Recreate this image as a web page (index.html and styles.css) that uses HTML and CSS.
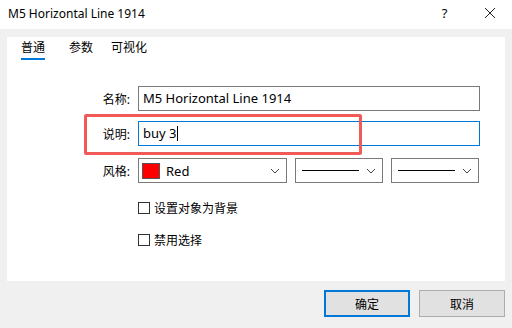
FILE: index.html
```html
<!DOCTYPE html>
<html lang="zh-CN">
<head>
    <meta charset="UTF-8">
    <title>M5 Horizontal Line 1914</title>
    <link rel="stylesheet" href="styles.css">
</head>
<body>
    <div class="dialog">
        <div class="title-bar">
            <span class="title">M5 Horizontal Line 1914</span>
            <span class="title-btn help">?</span>
            <span class="title-btn close">
                <svg width="12" height="12" viewBox="0 0 12 12"><path d="M1 1L11 11M11 1L1 11" stroke="#222" stroke-width="1"/></svg>
            </span>
        </div>

        <div class="body">
            <div class="panel">
                <div class="tabs">
                    <span class="tab active">普通</span>
                    <span class="tab">参数</span>
                    <span class="tab">可视化</span>
                </div>

                <div class="form">
                    <div class="row">
                        <label class="label">名称:</label>
                        <div class="input">M5 Horizontal Line 1914</div>
                    </div>
                    <div class="row highlighted">
                        <label class="label">说明:</label>
                        <div class="input focused">buy 3<span class="caret"></span></div>
                        <div class="mark"></div>
                    </div>
                    <div class="row">
                        <label class="label">风格:</label>
                        <div class="select color-select">
                            <span class="swatch"></span>
                            <span class="select-text">Red</span>
                            <svg class="chevron" width="10" height="6" viewBox="0 0 10 6"><path d="M1 1L5 5L9 1" fill="none" stroke="#444" stroke-width="1"/></svg>
                        </div>
                        <div class="select line-select">
                            <span class="line"></span>
                            <svg class="chevron" width="10" height="6" viewBox="0 0 10 6"><path d="M1 1L5 5L9 1" fill="none" stroke="#444" stroke-width="1"/></svg>
                        </div>
                        <div class="select line-select">
                            <span class="line"></span>
                            <svg class="chevron" width="10" height="6" viewBox="0 0 10 6"><path d="M1 1L5 5L9 1" fill="none" stroke="#444" stroke-width="1"/></svg>
                        </div>
                    </div>

                    <div class="checks">
                        <div class="check"><span class="box"></span>设置对象为背景</div>
                        <div class="check"><span class="box"></span>禁用选择</div>
                    </div>
                </div>
            </div>

            <div class="buttons">
                <button class="btn default">确定</button>
                <button class="btn">取消</button>
            </div>
        </div>
    </div>
</body>
</html>
```

FILE: styles.css
```css
body {
    margin: 0;
    font-family: "Noto Sans", "Noto Sans CJK SC", sans-serif;
    font-size: 12px;
    color: #000;
    background-color: #f0f0f0;
}

.dialog {
    width: 512px;
    height: 328px;
    display: flex;
    flex-direction: column;
    background-color: #f0f0f0;
}

.title-bar {
    height: 29px;
    background-color: #fff;
    display: flex;
    align-items: center;
    padding-left: 8px;
}

.title {
    flex: 1;
    font-size: 12px;
    margin-top: -3px;
}

.title-btn {
    width: 45px;
    text-align: center;
    font-size: 13px;
    margin-top: -3px;
}

.close svg {
    display: block;
    margin: 0 auto;
}

.body {
    flex: 1;
    padding: 8px 7px 0 7px;
}

.panel {
    height: 244px;
    background-color: #fff;
    box-sizing: border-box;
    padding: 0 0 0 14px;
}

.tabs {
    display: flex;
    gap: 24px;
    height: 25px;
    padding-top: 1px;
}

.tab {
    height: 22px;
    line-height: 20px;
    box-sizing: border-box;
}

.tab.active {
    border-bottom: 2px solid #0078d7;
}

.tab:nth-child(3) {
    margin-left: -6px;
}

.form {
    padding-top: 23px;
}

.row {
    position: relative;
    display: flex;
    align-items: center;
    gap: 8px;
    margin-bottom: 10px;
}

.label {
    width: 109px;
    flex-shrink: 0;
    text-align: right;
}

.input {
    width: 342px;
    height: 25px;
    box-sizing: border-box;
    border: 1px solid #7a7a7a;
    padding: 0 4px;
    line-height: 23px;
    font-size: 13px;
}

.input.focused {
    border-color: #0078d7;
}

.caret {
    display: inline-block;
    width: 1px;
    height: 15px;
    background-color: #000;
    vertical-align: -3px;
    margin-left: 1px;
}

.mark {
    position: absolute;
    left: 63px;
    top: -7px;
    width: 278px;
    height: 41px;
    box-sizing: border-box;
    border: 3px solid #f25a5a;
    border-radius: 2px;
}

.highlighted {
    margin-bottom: 12px;
}

.select {
    height: 25px;
    box-sizing: border-box;
    border: 1px solid #7a7a7a;
    display: flex;
    align-items: center;
    padding: 0 6px 0 3px;
}

.color-select {
    width: 149px;
    gap: 6px;
}

.swatch {
    width: 18px;
    height: 16px;
    box-sizing: border-box;
    background-color: #f00;
    border: 1px solid #555;
}

.select-text {
    flex: 1;
    font-size: 13px;
}

.line-select {
    width: 88px;
    padding-left: 6px;
}

.line-select .line {
    width: 57px;
    height: 1px;
    background-color: #000;
    margin-right: auto;
}

.chevron {
    display: block;
}

.checks {
    padding-left: 117px;
    padding-top: 7px;
}

.check {
    display: flex;
    align-items: center;
    gap: 4px;
    height: 16px;
    margin-bottom: 16px;
}

.box {
    width: 12px;
    height: 12px;
    box-sizing: border-box;
    border: 1px solid #333;
}

.buttons {
    display: flex;
    justify-content: flex-end;
    gap: 9px;
    padding: 9px 0 0 0;
}

.btn {
    width: 86px;
    height: 27px;
    box-sizing: border-box;
    background-color: #e1e1e1;
    border: 1px solid #adadad;
    font-family: "Noto Sans", "Noto Sans CJK SC", sans-serif;
    font-size: 12px;
    color: #000;
    padding: 0;
}

.btn.default {
    border: 2px solid #0078d7;
}
```
